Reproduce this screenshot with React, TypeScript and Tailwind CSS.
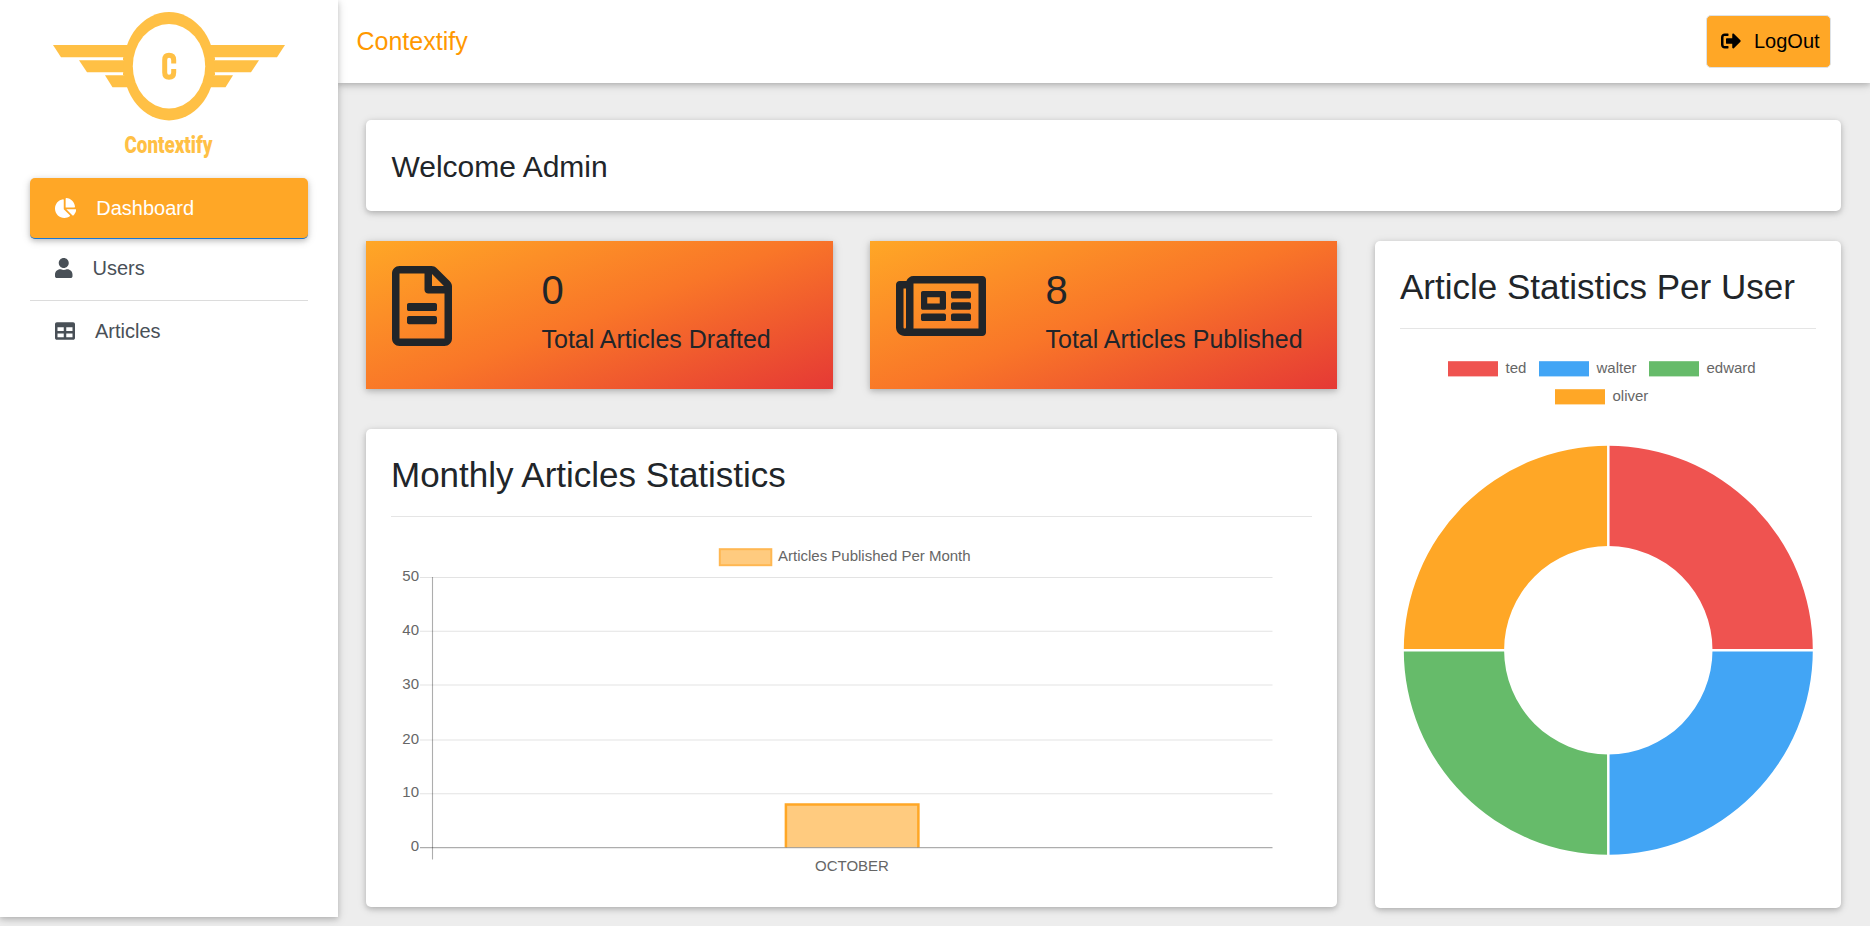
import type { ReactNode } from "react";
import {
  FaChartPie,
  FaRegFileAlt,
  FaRegNewspaper,
  FaSignOutAlt,
  FaTable,
  FaUser,
} from "react-icons/fa";

const cardShadow = "shadow-[0_2px_5px_rgba(0,0,0,0.16),0_2px_10px_rgba(0,0,0,0.14)]";

function Logo() {
  return (
    <svg viewBox="0 0 338 170" className="h-[170px] w-[338px]" fill="#ffc045">
      <path d="M53 45H285L277 57.3H61Z" />
      <path d="M79 60.3H259L251 72.3H87Z" />
      <path d="M105 75.3H233L225.5 87.3H112.5Z" />
      <path d="M123 57.3h92v3h-92zM123 72.3h92v3h-92z" />
      <ellipse cx="169" cy="66.2" rx="45.5" ry="54.2" />
      <ellipse cx="169" cy="66.2" rx="36.2" ry="42.2" fill="#fff" />
      <path
        d="M173.700 63.500V60Q173.700 55.300 169 55.300Q164.700 55.300 164.700 60V72.500Q164.700 77.200 169 77.200Q173.700 77.200 173.700 72.500V69"
        fill="none"
        stroke="#ffc045"
        strokeWidth="5"
      />
      <text
        x="124.500"
        y="153.300"
        fontFamily="'Roboto', 'Liberation Sans', sans-serif"
        fontSize="23.500"
        fontWeight="900"
        textLength="88"
        lengthAdjust="spacingAndGlyphs"
      >
        Contextify
      </text>
    </svg>
  );
}

function Sidebar() {
  return (
    <aside className={`z-10 flex h-[917px] w-[338px] shrink-0 flex-col bg-white ${cardShadow}`}>
      <Logo />
      <nav className="mt-2 flex flex-col px-[30px] text-xl leading-[30px] text-[#495057]">
        <a
          className={`flex h-[61px] items-center rounded-[5px] border-b border-[#1976d2] bg-[#ffa726] pb-px pl-[25px] text-white ${cardShadow}`}
        >
          <FaChartPie className="mr-5 h-5 w-[21.250px]" />
          Dashboard
        </a>
        <a className="flex h-[62px] items-center border-b border-[#dcdcdc] pb-[3px] pl-[25px]">
          <FaUser className="mr-5 h-5 w-[17.500px]" />
          Users
        </a>
        <a className="flex h-[59px] items-center pl-[25px]">
          <FaTable className="mr-5 h-5 w-5" />
          Articles
        </a>
      </nav>
    </aside>
  );
}

function Header() {
  return (
    <header className={`flex h-[83px] shrink-0 items-center justify-between bg-white pr-[39px] pl-[18.500px] ${cardShadow}`}>
      <span className="pb-[2px] text-[25px] leading-[38px] text-[#ff9800]">Contextify</span>
      <button className="flex h-[53px] w-[125px] items-center rounded-[5px] border border-[#dee2e6] bg-[#ffa726] pb-[2px] pl-[13.500px] text-xl text-black">
        <FaSignOutAlt className="mr-[13.500px] h-5 w-5" />
        LogOut
      </button>
    </header>
  );
}

function StatCard({ icon, value, label }: { icon: ReactNode; value: number; label: string }) {
  return (
    <div
      className={`flex h-[148px] w-[467px] bg-[linear-gradient(160deg,#ffa726_0%,#f97628_50%,#e53935_100%)] pt-[25px] pl-[25.500px] ${cardShadow}`}
    >
      <div className="w-[150px]">{icon}</div>
      <div className="flex flex-col">
        <span className="text-[40px] leading-12">{value}</span>
        <span className="mt-[10px] text-[25px] leading-[30px] whitespace-nowrap">{label}</span>
      </div>
    </div>
  );
}

const ticks = [
  { value: 50, y: 60.5 },
  { value: 40, y: 114.300 },
  { value: 30, y: 168 },
  { value: 20, y: 223 },
  { value: 10, y: 276.800 },
];

function BarChart() {
  return (
    <svg
      viewBox="0 0 921 370"
      className="h-[370px] w-[921px]"
      fontFamily="'Liberation Sans', Arial, sans-serif"
      fontSize="15"
      fill="#666"
    >
      <rect x="328.800" y="32.200" width="51.500" height="16" fill="#ffcb7f" stroke="#ffb752" strokeWidth="2" />
      <text x="387" y="44">Articles Published Per Month</text>
      {ticks.map((t) => (
        <g key={t.value}>
          <path d={`M29 ${t.y}H881.500`} stroke="#000" strokeOpacity="0.11" strokeWidth="1.100" />
          <text x="28" y={Math.floor(t.y) + 4} textAnchor="end">
            {t.value}
          </text>
        </g>
      ))}
      <path d="M394.900 330.300V287.500H527.400V330.300Z" fill="#ffcb7f" />
      <path d="M394.900 330.300V287.500H527.400V330.300" fill="none" stroke="#ffa726" strokeWidth="2.500" />
      <path d="M41.500 60V342.500" stroke="#000" strokeOpacity="0.32" strokeWidth="1.100" />
      <path d="M29 330.600H881.500" stroke="#000" strokeOpacity="0.32" strokeWidth="1.250" />
      <text x="28" y="334" textAnchor="end">0</text>
      <text x="461" y="353.700" textAnchor="middle">OCTOBER</text>
    </svg>
  );
}

const users = [
  { name: "ted", color: "#ef5350", x: 48, y: 32 },
  { name: "walter", color: "#42a5f5", x: 139, y: 32 },
  { name: "edward", color: "#66bb6a", x: 249, y: 32 },
  { name: "oliver", color: "#ffa726", x: 155, y: 60 },
];

function DonutChart() {
  return (
    <svg
      viewBox="0 0 416 560"
      className="h-[560px] w-[416px]"
      fontFamily="'Liberation Sans', Arial, sans-serif"
      fontSize="15"
    >
      {users.map((u, i) => (
        <g key={u.name}>
          <rect x={u.x} y={u.y + 0.2} width="50" height="15.200" fill={u.color} />
          <text x={u.x + 57.5} y={u.y + 12} fill="#666">
            {u.name}
          </text>
          <path
            d="M0 -104.200V-204.500A204.500 204.500 0 0 1 204.500 0H104.200A104.200 104.200 0 0 0 0 -104.200Z"
            fill={u.color}
            transform={`translate(208.300 321.200) rotate(${i * 90})`}
          />
        </g>
      ))}
      <path d="M208.300 116V526M3 321.200H414" stroke="#fff" strokeWidth="2.500" />
    </svg>
  );
}

function ChartCard({ title, className, children }: { title: string; className: string; children: ReactNode }) {
  return (
    <section className={`rounded-[5px] bg-white px-[25px] pt-[25px] ${cardShadow} ${className}`}>
      <h2 className="text-[35px] leading-[42px] whitespace-nowrap">{title}</h2>
      <hr className="mt-5 border-t border-[#e5e5e5]" />
      {children}
    </section>
  );
}

export default function App() {
  return (
    <div className="flex h-[926px] w-[1870px] overflow-hidden bg-[#ededed] font-['Liberation_Sans',Arial,sans-serif] text-[#212529]">
      <Sidebar />
      <div className="flex w-[1532px] flex-col">
        <Header />
        <main className="flex flex-col pt-[37px] pl-7">
          <section className={`flex h-[91px] w-[1475px] items-center rounded-[5px] bg-white px-[25.500px] ${cardShadow}`}>
            <h1 className="pt-[3px] text-[30px] leading-9">Welcome Admin</h1>
          </section>
          <div className="mt-[30px] flex gap-[38px]">
            <div className="flex w-[971px] flex-col gap-10">
              <div className="flex justify-between">
                <StatCard icon={<FaRegFileAlt className="h-20 w-[60px]" />} value={0} label="Total Articles Drafted" />
                <StatCard icon={<FaRegNewspaper className="h-20 w-[90px]" />} value={8} label="Total Articles Published" />
              </div>
              <ChartCard title="Monthly Articles Statistics" className="h-[478px] w-[971px]">
                <BarChart />
              </ChartCard>
            </div>
            <ChartCard title="Article Statistics Per User" className="h-[667px] w-[466px]">
              <DonutChart />
            </ChartCard>
          </div>
        </main>
      </div>
    </div>
  );
}
